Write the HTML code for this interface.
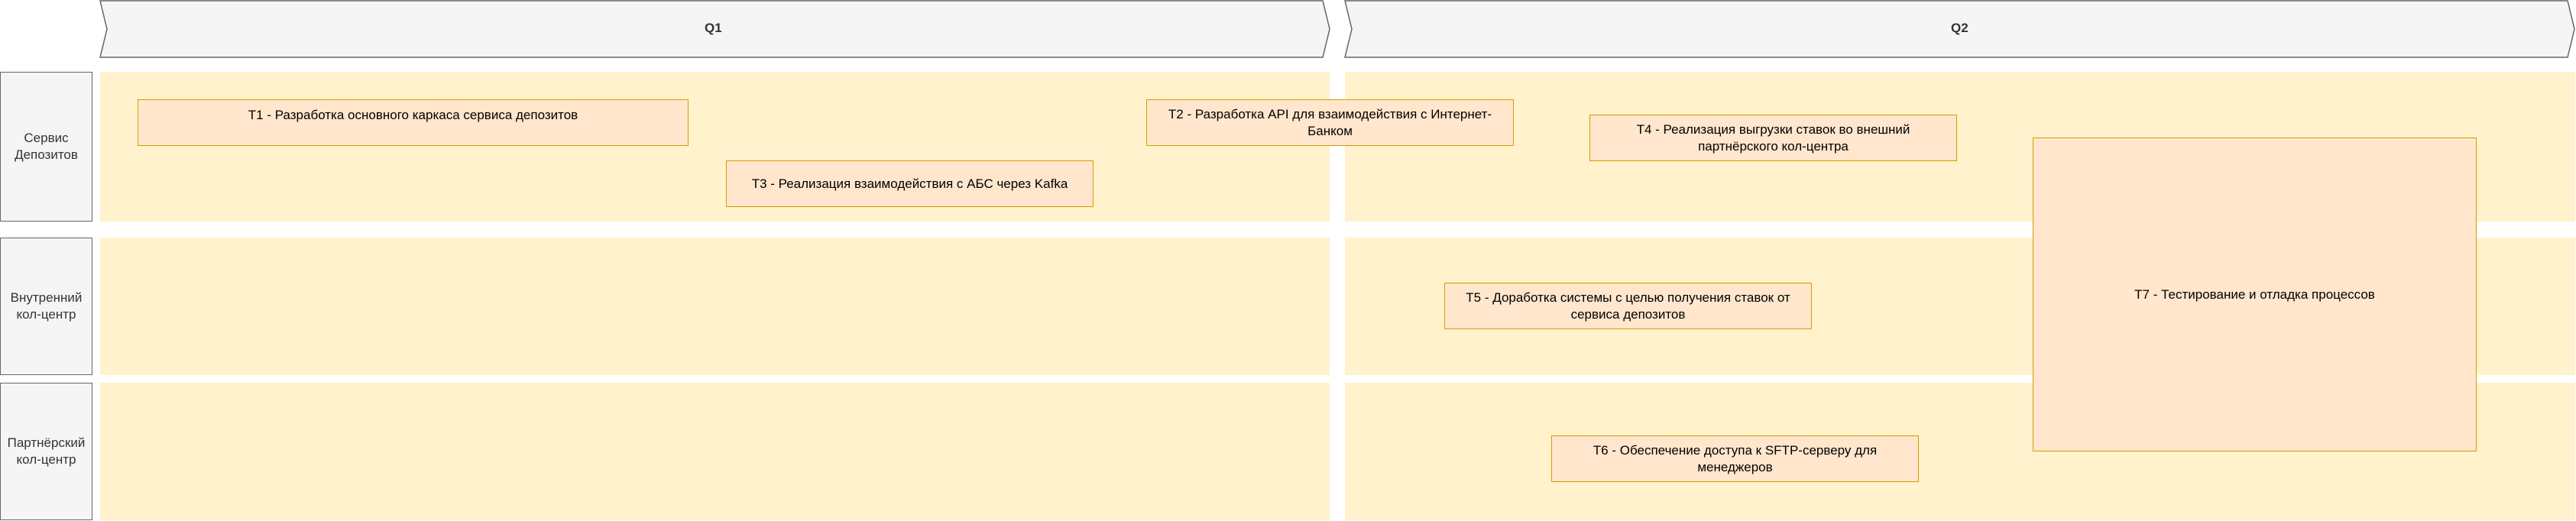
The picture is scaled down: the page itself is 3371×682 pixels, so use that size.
<!DOCTYPE html>
<html><head><meta charset="utf-8"><style>
body{margin:0;width:3371px;height:682px;background:#fff;position:relative;overflow:hidden;font-family:"Liberation Sans",Arial,sans-serif}
.a{position:absolute;box-sizing:border-box}
.lane{background:#fff2cc}
.lbl{background:#f5f5f5;border:1.5px solid #666;color:#333;font-size:17px;line-height:22px;display:flex;align-items:center;justify-content:center;text-align:center}
.t{background:#ffe6cc;border:1.5px solid #d79b00;color:#000;font-size:17px;line-height:22px;display:flex;align-items:center;justify-content:center;text-align:center;padding:0 8px}
.q{font-weight:bold;font-size:17px;color:#333;position:absolute;top:27px}
</style></head><body>
<svg class="a" style="left:0;top:0" width="3371" height="80">
<polygon points="131,1 1731,1 1740,38 1731,75 131,75 140,38" fill="#f5f5f5" stroke="#666" stroke-width="1.5"/>
<polygon points="1760,1 3360,1 3369,38 3360,75 1760,75 1769,38" fill="#f5f5f5" stroke="#666" stroke-width="1.5"/>
</svg>
<div class="q" style="left:922px">Q1</div>
<div class="q" style="left:2553px">Q2</div>

<div class="a lbl" style="left:0;top:94px;width:121px;height:196px">Сервис<br>Депозитов</div>
<div class="a lbl" style="left:0;top:311px;width:121px;height:180px">Внутренний<br>кол-центр</div>
<div class="a lbl" style="left:0;top:501px;width:121px;height:180px">Партнёрский<br>кол-центр</div>

<div class="a lane" style="left:131px;top:94px;width:1609px;height:196px"></div>
<div class="a lane" style="left:131px;top:311px;width:1609px;height:180px"></div>
<div class="a lane" style="left:131px;top:501px;width:1609px;height:180px"></div>
<div class="a lane" style="left:1760px;top:94px;width:1610px;height:196px"></div>
<div class="a lane" style="left:1760px;top:311px;width:1610px;height:180px"></div>
<div class="a lane" style="left:1760px;top:501px;width:1610px;height:180px"></div>

<div class="a t" style="left:180px;top:130px;width:721px;height:61px;align-items:flex-start;padding-top:9px">T1 - Разработка основного каркаса сервиса депозитов</div>
<div class="a t" style="left:950px;top:210px;width:481px;height:61px">T3 - Реализация взаимодействия с АБС через Kafka</div>
<div class="a t" style="left:1500px;top:130px;width:481px;height:61px">T2 - Разработка API для взаимодействия с Интернет-Банком</div>
<div class="a t" style="left:2080px;top:150px;width:481px;height:61px">T4 - Реализация выгрузки ставок во внешний партнёрского кол-центра</div>
<div class="a t" style="left:1890px;top:370px;width:481px;height:61px">T5 - Доработка системы с целью получения ставок от сервиса депозитов</div>
<div class="a t" style="left:2030px;top:570px;width:481px;height:61px">T6 - Обеспечение доступа к SFTP-серверу для менеджеров</div>
<div class="a t" style="left:2660px;top:180px;width:581px;height:411px">T7 - Тестирование и отладка процессов</div>
</body></html>
